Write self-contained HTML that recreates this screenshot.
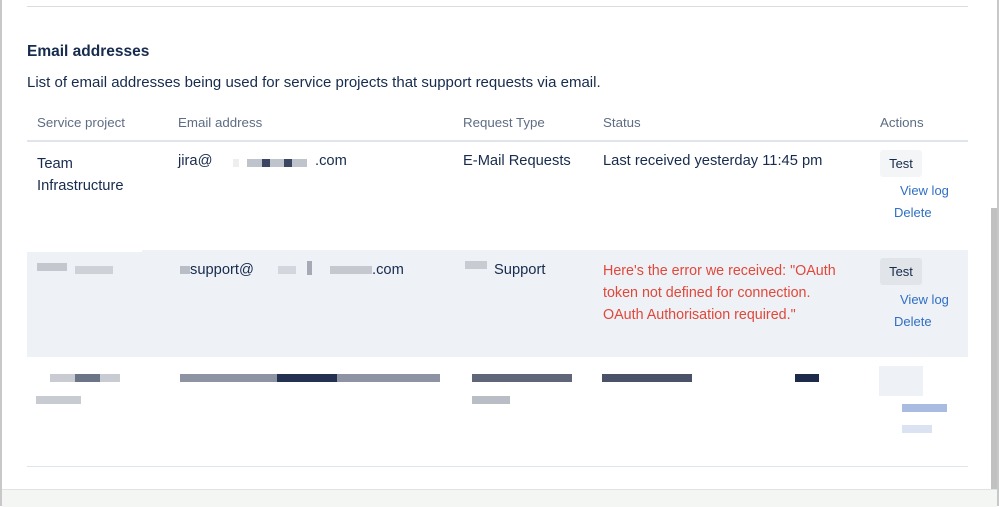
<!DOCTYPE html>
<html><head><style>
body{margin:0;width:999px;height:506px;overflow:hidden;background:#fff;font-family:"Liberation Sans",sans-serif;color:#172b4d;position:relative}
.a{position:absolute;white-space:nowrap}
.h{font-size:13.3px;color:#5e6c84}
.t{font-size:14.7px}
.btn{position:absolute;background:#f4f5f7;border-radius:3px;font-size:13px;text-align:center;line-height:27px;width:42px;height:27px}
.lk{color:#2f6fc4;font-size:13px}
.px{position:absolute;height:8px}
</style></head><body>
<div class="a" style="left:0;top:0;width:2px;height:506px;background:#c8c8c8"></div>
<div class="a" style="left:997px;top:0;width:2px;height:506px;background:#c8c8c8"></div>
<div class="a" style="left:991px;top:208px;width:6px;height:282px;background:#c1c1c1"></div>
<div class="a" style="left:27px;top:6px;width:941px;height:1px;background:#dcdcdc"></div>
<div class="a" style="left:27px;top:43px;font-size:15.5px;font-weight:bold">Email addresses</div>
<div class="a" style="left:27px;top:74px;font-size:15px">List of email addresses being used for service projects that support requests via email.</div>
<div class="a h" style="left:37px;top:115px">Service project</div>
<div class="a h" style="left:178px;top:115px">Email address</div>
<div class="a h" style="left:463px;top:115px">Request Type</div>
<div class="a h" style="left:603px;top:115px">Status</div>
<div class="a h" style="left:880px;top:115px">Actions</div>
<div class="a" style="left:27px;top:140px;width:941px;height:2px;background:#dfe5ea"></div>
<div class="a t" style="left:37px;top:153px;line-height:22px">Team<br>Infrastructure</div>
<div class="a t" style="left:178px;top:153px">jira@</div>
<div class="px" style="left:233px;top:159px;width:6px;background:#eee"></div>
<div class="px" style="left:247px;top:159px;width:60px;background:#bfc3cb"></div>
<div class="px" style="left:262px;top:159px;width:8px;background:#3b4660"></div>
<div class="px" style="left:284px;top:159px;width:8px;background:#3b4660"></div>
<div class="a t" style="left:315px;top:153px">.com</div>
<div class="a t" style="left:463px;top:153px">E-Mail Requests</div>
<div class="a t" style="left:603px;top:153px">Last received yesterday 11:45 pm</div>
<div class="btn" style="left:880px;top:150px">Test</div>
<div class="a lk" style="left:900px;top:183px">View log</div>
<div class="a lk" style="left:894px;top:205px">Delete</div>
<div class="a" style="left:27px;top:250px;width:941px;height:107px;background:#eef1f6"></div>
<div class="a" style="left:27px;top:250px;width:115px;height:2px;background:#fff"></div>
<div class="px" style="left:37px;top:263px;width:30px;background:#c4c7ce"></div>
<div class="px" style="left:75px;top:266px;width:38px;background:#ced1d8"></div>
<div class="px" style="left:180px;top:266px;width:10px;background:#b9bdc6"></div>
<div class="a t" style="left:190px;top:262px">support@</div>
<div class="px" style="left:278px;top:266px;width:18px;background:#d3d6dc"></div>
<div class="px" style="left:307px;top:261px;width:5px;height:14px;background:#a5aab4"></div>
<div class="px" style="left:330px;top:266px;width:42px;background:#c5c8cf"></div>
<div class="a t" style="left:372px;top:262px">.com</div>
<div class="px" style="left:465px;top:261px;width:22px;background:#c8cbd2"></div>
<div class="a t" style="left:494px;top:262px">Support</div>
<div class="a" style="left:603px;top:260px;font-size:14.3px;color:#e0483a;line-height:22px;white-space:normal;width:250px">Here's the error we received: "OAuth token not defined for connection. OAuth Authorisation required."</div>
<div class="btn" style="left:880px;top:258px;background:#e1e4e9">Test</div>
<div class="a lk" style="left:900px;top:292px">View log</div>
<div class="a lk" style="left:894px;top:314px">Delete</div>
<div class="px" style="left:50px;top:374px;width:70px;background:#c8cbd2"></div>
<div class="px" style="left:75px;top:374px;width:25px;background:#6c7488"></div>
<div class="px" style="left:180px;top:374px;width:260px;background:#8d93a3"></div>
<div class="px" style="left:277px;top:374px;width:60px;background:#24304f"></div>
<div class="px" style="left:472px;top:374px;width:100px;background:#5f6678"></div>
<div class="px" style="left:602px;top:374px;width:90px;background:#4a5268"></div>
<div class="px" style="left:795px;top:374px;width:24px;background:#1e2a4a"></div>
<div class="px" style="left:36px;top:396px;width:45px;background:#c8cbd2"></div>
<div class="px" style="left:472px;top:396px;width:38px;background:#b9bdc6"></div>
<div class="a" style="left:879px;top:366px;width:44px;height:30px;background:#eef1f6"></div>
<div class="px" style="left:902px;top:404px;width:45px;background:#a9bbe0"></div>
<div class="px" style="left:902px;top:425px;width:30px;background:#dbe2f1"></div>
<div class="a" style="left:27px;top:466px;width:941px;height:1px;background:#dfe5ea"></div>
<div class="a" style="left:2px;top:489px;width:995px;height:17px;background:#f4f6f4;border-top:1px solid #e0e4e0"></div>
</body></html>
